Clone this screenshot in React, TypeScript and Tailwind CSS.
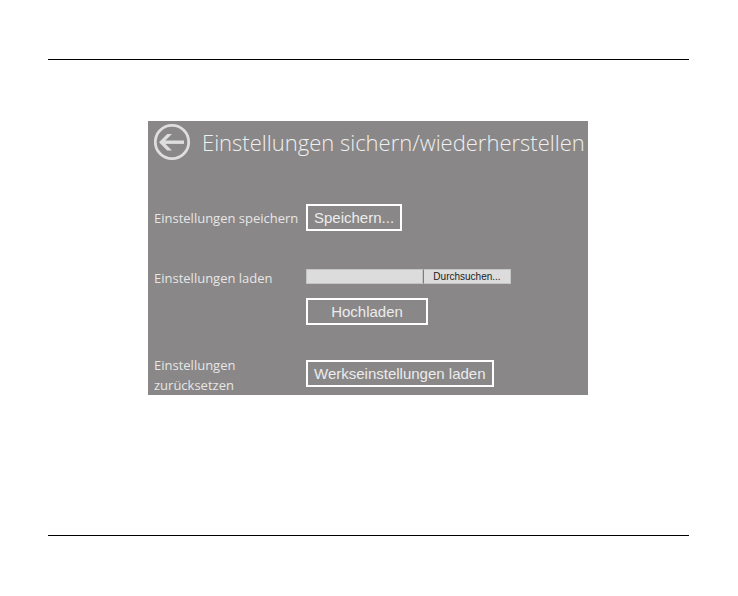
import { useRef, useState } from "react";

const labelClass = "w-[152px] shrink-0 text-[13px] leading-5 text-[#e6e6e6]";
const buttonClass =
  "h-[27px] border-2 border-white px-1.5 font-['Liberation_Sans',Arial,sans-serif] text-[15px] leading-none whitespace-nowrap text-[#ececec]";

export default function App() {
  const fileRef = useRef<HTMLInputElement>(null);
  const [fileName, setFileName] = useState("");

  return (
    <div className="bg-white pt-[59px] pr-[49px] pl-12 font-['Open_Sans','Noto_Sans',sans-serif]">
      <hr className="border-t border-black" />

      <main className="mt-[61px] mb-[140px] ml-[100px] max-w-[440px] bg-[#898787] px-1.5">
        {/* Header */}
        <header className="flex items-center gap-2.5 pt-0.5">
          <button type="button" aria-label="Zurück" className="shrink-0">
            <svg viewBox="0 0 38 38" className="h-[38px] w-[38px]" fill="none" stroke="#dedede">
              <circle cx="18" cy="19" r="16.7" strokeWidth="2.8" />
              <path d="M30 19.2H8" strokeWidth="3.4" />
              <path d="M18 11H13.2L5 19.2l8.2 8.3H18l-8.3-8.3Z" fill="#dedede" stroke="none" />
            </svg>
          </button>
          <h1 className="text-[22px] leading-8 font-light whitespace-nowrap text-[#f0f0f0]">
            Einstellungen sichern/wiederherstellen
          </h1>
        </header>

        {/* Save */}
        <div className="mt-[43px] flex items-start">
          <label htmlFor="save" className={`${labelClass} pt-1 whitespace-nowrap`}>
            Einstellungen speichern
          </label>
          <button id="save" type="button" className={buttonClass}>
            Speichern...
          </button>
        </div>

        {/* Load */}
        <div className="mt-[37px] flex items-start">
          <label htmlFor="file-name" className={labelClass}>
            Einstellungen laden
          </label>
          <div className="pt-px">
            <div className="flex h-[15px]">
              <input
                id="file-name"
                type="text"
                readOnly
                value={fileName}
                className="w-[117px] border border-[#c4c4c4] bg-[#dcdcdc] px-1 text-[10px] text-black"
              />
              <button
                type="button"
                onClick={() => fileRef.current?.click()}
                className="w-[88px] border border-[#c4c4c4] border-l-[#7c7c7c] bg-[#dcdcdc] font-['Liberation_Sans',Arial,sans-serif] text-[10px] leading-none text-[#222]"
              >
                Durchsuchen...
              </button>
              <input
                ref={fileRef}
                type="file"
                aria-label="Datei"
                className="hidden"
                onChange={(e) => setFileName(e.target.files?.[0]?.name ?? "")}
              />
            </div>
            <button type="button" className={`${buttonClass} mt-3.5 w-[122px]`}>
              Hochladen
            </button>
          </div>
        </div>

        {/* Reset */}
        <div className="mt-[30px] flex items-start">
          <label htmlFor="reset" className={labelClass}>
            Einstellungen
            <br />
            zurücksetzen
          </label>
          <button id="reset" type="button" className={`${buttonClass} mt-[5px]`}>
            Werkseinstellungen laden
          </button>
        </div>
      </main>

      <hr className="border-t border-black" />
    </div>
  );
}
